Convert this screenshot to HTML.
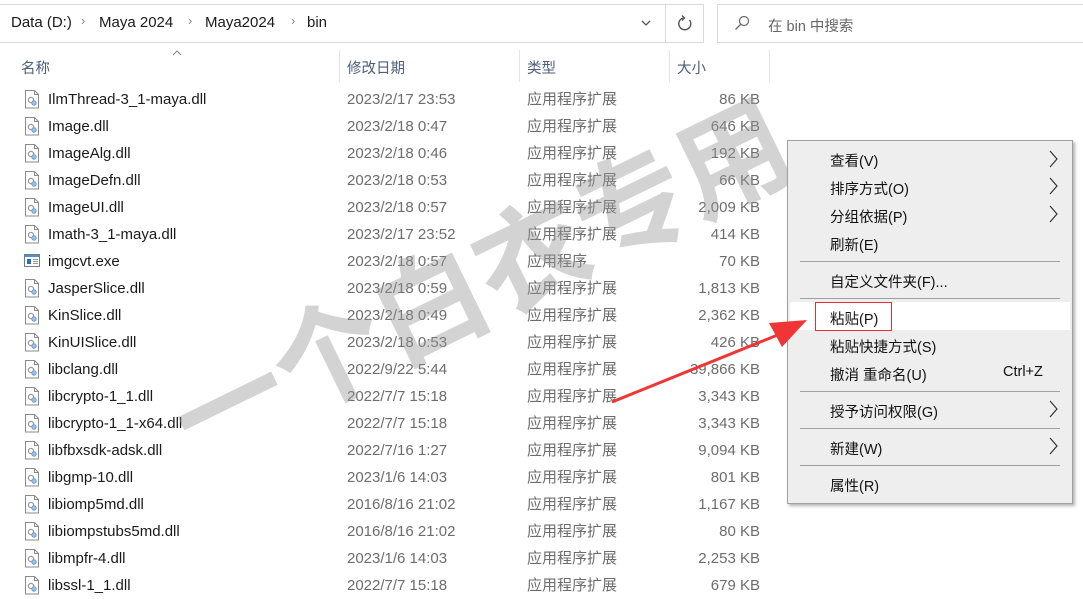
<!DOCTYPE html>
<html><head><meta charset="utf-8"><style>
body{margin:0;width:1083px;height:599px;overflow:hidden;background:#fff;position:relative;font-family:"Liberation Sans","Noto Sans CJK SC",sans-serif;}
.a{position:absolute;white-space:nowrap}
.r{position:absolute;left:0;width:780px;height:27px;font-size:15px;line-height:27px}
.r .n{position:absolute;left:48px;color:#1a1a1a}
.r .d{position:absolute;left:347px;color:#6d6d6d}
.r .t{position:absolute;left:527px;color:#6d6d6d}
.r .s{position:absolute;right:20px;color:#6d6d6d}
.r svg{position:absolute;left:24px;top:4px}
.m{position:absolute;left:830px;font-size:14.5px;color:#111;white-space:nowrap}
.sep{position:absolute;left:800px;width:260px;height:1px;background:#a0a0a0}
</style></head><body>
<div class="a" style="left:0;top:4px;width:665px;height:37px;border-top:1px solid #d9d9d9;border-bottom:1px solid #d9d9d9;border-right:1px solid #d9d9d9"></div>
<div class="a" style="left:665px;top:4px;width:38px;height:37px;border:1px solid #d9d9d9;border-left:none"></div>
<div class="a" style="left:717px;top:4px;width:370px;height:37px;border:1px solid #d9d9d9"></div>
<div class="a" style="left:11px;top:14px;font-size:15px;color:#1a1a1a">Data (D:)</div>
<div class="a" style="left:81px;top:13px;font-size:13px;color:#888">›</div>
<div class="a" style="left:99px;top:14px;font-size:15px;color:#1a1a1a">Maya 2024</div>
<div class="a" style="left:188px;top:13px;font-size:13px;color:#888">›</div>
<div class="a" style="left:205px;top:14px;font-size:15px;color:#1a1a1a">Maya2024</div>
<div class="a" style="left:291px;top:13px;font-size:13px;color:#888">›</div>
<div class="a" style="left:307px;top:14px;font-size:15px;color:#1a1a1a">bin</div>
<svg class="a" style="left:641px;top:20px" width="10" height="7"><path d="M1 1l4 4 4-4" stroke="#555" fill="none" stroke-width="1.3"/></svg>
<svg class="a" style="left:677px;top:15px" width="16" height="17"><path d="M12.5 5A6 6 0 1 1 6 3" stroke="#555" fill="none" stroke-width="1.4"/><path d="M5 0.5l2.5 2.5-2.5 2.5" stroke="#555" fill="none" stroke-width="1.4"/></svg>
<svg class="a" style="left:734px;top:15px" width="16" height="16"><circle cx="10" cy="6" r="4.5" stroke="#666" fill="none" stroke-width="1.2"/><path d="M6.8 9.2L1.5 14.5" stroke="#666" stroke-width="1.3"/></svg>
<div class="a" style="left:768px;top:15px;font-size:14.5px;color:#666">在 bin 中搜索</div>
<svg class="a" style="left:172px;top:50px" width="10" height="6"><path d="M1 5l4-4 4 4" stroke="#888" fill="none"/></svg>
<div class="a" style="left:21px;top:57px;font-size:14.5px;color:#4c607a">名称</div>
<div class="a" style="left:339px;top:50px;width:1px;height:32px;background:#e5e5e5"></div>
<div class="a" style="left:347px;top:57px;font-size:14.5px;color:#4c607a">修改日期</div>
<div class="a" style="left:519px;top:50px;width:1px;height:32px;background:#e5e5e5"></div>
<div class="a" style="left:527px;top:57px;font-size:14.5px;color:#4c607a">类型</div>
<div class="a" style="left:669px;top:50px;width:1px;height:32px;background:#e5e5e5"></div>
<div class="a" style="left:677px;top:57px;font-size:14.5px;color:#4c607a">大小</div>
<div class="a" style="left:769px;top:50px;width:1px;height:32px;background:#e5e5e5"></div>
<svg width="0" height="0" style="position:absolute"><defs><g id="dl"><path d="M1.5 .5h9l4 4v13.5h-13z" fill="#fff" stroke="#8a8a8a"/><path d="M10.5 .5v4h4" fill="none" stroke="#8a8a8a"/><circle cx="7" cy="10" r="2.6" fill="none" stroke="#999" stroke-width="1.3"/><circle cx="10" cy="13" r="2.2" fill="#9fc3e6" stroke="#6a9acb"/></g>
<g id="ex"><rect x=".5" y="2.5" width="15" height="12" fill="#fff" stroke="#7a7a7a"/><rect x="1" y="3" width="14" height="2" fill="#4a8fd8"/><rect x="3" y="7" width="4" height="5" fill="#1f6fd0"/><path d="M9 7.5h5M9 9.5h5M9 11.5h5" stroke="#999"/></g></defs></svg>

<div class="r" style="top:86px"><svg width="16" height="19"><use href="#dl"/></svg><span class="n">IlmThread-3_1-maya.dll</span><span class="d">2023/2/17 23:53</span><span class="t">应用程序扩展</span><span class="s">86 KB</span></div>
<div class="r" style="top:113px"><svg width="16" height="19"><use href="#dl"/></svg><span class="n">Image.dll</span><span class="d">2023/2/18 0:47</span><span class="t">应用程序扩展</span><span class="s">646 KB</span></div>
<div class="r" style="top:140px"><svg width="16" height="19"><use href="#dl"/></svg><span class="n">ImageAlg.dll</span><span class="d">2023/2/18 0:46</span><span class="t">应用程序扩展</span><span class="s">192 KB</span></div>
<div class="r" style="top:167px"><svg width="16" height="19"><use href="#dl"/></svg><span class="n">ImageDefn.dll</span><span class="d">2023/2/18 0:53</span><span class="t">应用程序扩展</span><span class="s">66 KB</span></div>
<div class="r" style="top:194px"><svg width="16" height="19"><use href="#dl"/></svg><span class="n">ImageUI.dll</span><span class="d">2023/2/18 0:57</span><span class="t">应用程序扩展</span><span class="s">2,009 KB</span></div>
<div class="r" style="top:221px"><svg width="16" height="19"><use href="#dl"/></svg><span class="n">Imath-3_1-maya.dll</span><span class="d">2023/2/17 23:52</span><span class="t">应用程序扩展</span><span class="s">414 KB</span></div>
<div class="r" style="top:248px"><svg width="16" height="19"><use href="#ex"/></svg><span class="n">imgcvt.exe</span><span class="d">2023/2/18 0:57</span><span class="t">应用程序</span><span class="s">70 KB</span></div>
<div class="r" style="top:275px"><svg width="16" height="19"><use href="#dl"/></svg><span class="n">JasperSlice.dll</span><span class="d">2023/2/18 0:59</span><span class="t">应用程序扩展</span><span class="s">1,813 KB</span></div>
<div class="r" style="top:302px"><svg width="16" height="19"><use href="#dl"/></svg><span class="n">KinSlice.dll</span><span class="d">2023/2/18 0:49</span><span class="t">应用程序扩展</span><span class="s">2,362 KB</span></div>
<div class="r" style="top:329px"><svg width="16" height="19"><use href="#dl"/></svg><span class="n">KinUISlice.dll</span><span class="d">2023/2/18 0:53</span><span class="t">应用程序扩展</span><span class="s">426 KB</span></div>
<div class="r" style="top:356px"><svg width="16" height="19"><use href="#dl"/></svg><span class="n">libclang.dll</span><span class="d">2022/9/22 5:44</span><span class="t">应用程序扩展</span><span class="s">39,866 KB</span></div>
<div class="r" style="top:383px"><svg width="16" height="19"><use href="#dl"/></svg><span class="n">libcrypto-1_1.dll</span><span class="d">2022/7/7 15:18</span><span class="t">应用程序扩展</span><span class="s">3,343 KB</span></div>
<div class="r" style="top:410px"><svg width="16" height="19"><use href="#dl"/></svg><span class="n">libcrypto-1_1-x64.dll</span><span class="d">2022/7/7 15:18</span><span class="t">应用程序扩展</span><span class="s">3,343 KB</span></div>
<div class="r" style="top:437px"><svg width="16" height="19"><use href="#dl"/></svg><span class="n">libfbxsdk-adsk.dll</span><span class="d">2022/7/16 1:27</span><span class="t">应用程序扩展</span><span class="s">9,094 KB</span></div>
<div class="r" style="top:464px"><svg width="16" height="19"><use href="#dl"/></svg><span class="n">libgmp-10.dll</span><span class="d">2023/1/6 14:03</span><span class="t">应用程序扩展</span><span class="s">801 KB</span></div>
<div class="r" style="top:491px"><svg width="16" height="19"><use href="#dl"/></svg><span class="n">libiomp5md.dll</span><span class="d">2016/8/16 21:02</span><span class="t">应用程序扩展</span><span class="s">1,167 KB</span></div>
<div class="r" style="top:518px"><svg width="16" height="19"><use href="#dl"/></svg><span class="n">libiompstubs5md.dll</span><span class="d">2016/8/16 21:02</span><span class="t">应用程序扩展</span><span class="s">80 KB</span></div>
<div class="r" style="top:545px"><svg width="16" height="19"><use href="#dl"/></svg><span class="n">libmpfr-4.dll</span><span class="d">2023/1/6 14:03</span><span class="t">应用程序扩展</span><span class="s">2,253 KB</span></div>
<div class="r" style="top:572px"><svg width="16" height="19"><use href="#dl"/></svg><span class="n">libssl-1_1.dll</span><span class="d">2022/7/7 15:18</span><span class="t">应用程序扩展</span><span class="s">679 KB</span></div>

<div class="a" style="font-family:'Noto Sans CJK SC',sans-serif;font-weight:700;font-size:112px;line-height:112px;color:rgba(150,150,150,0.42);transform:rotate(-26deg);transform-origin:0 100%;top:360px;left:200px;letter-spacing:0px">一个白衣专用</div>

<div class="a" style="left:787px;top:140px;width:284px;height:362px;background:#eeeeee;border:1px solid #a0a0a0;box-shadow:2px 2px 3px rgba(0,0,0,.3)"></div>
<div class="a" style="left:790px;top:302px;width:280px;height:28px;background:#fff"></div>
<div class="a" style="left:815px;top:302px;width:75px;height:27px;border:1px solid #e03030"></div>
<div class="m" style="top:150px">查看(V)</div>
<div class="m" style="top:178px">排序方式(O)</div>
<div class="m" style="top:206px">分组依据(P)</div>
<div class="m" style="top:234px">刷新(E)</div>
<div class="sep" style="top:261px"></div>
<div class="m" style="top:271px">自定义文件夹(F)...</div>
<div class="sep" style="top:298px"></div>
<div class="m" style="top:308px">粘贴(P)</div>
<div class="m" style="top:336px">粘贴快捷方式(S)</div>
<div class="m" style="top:364px">撤消 重命名(U)</div>
<div class="m" style="top:364px;left:1003px">Ctrl+Z</div>
<div class="sep" style="top:391px"></div>
<div class="m" style="top:401px">授予访问权限(G)</div>
<div class="sep" style="top:428px"></div>
<div class="m" style="top:438px">新建(W)</div>
<div class="sep" style="top:465px"></div>
<div class="m" style="top:475px">属性(R)</div>
<svg class="a" style="left:1048px;top:150px" width="12" height="340"><g stroke="#333" fill="none" stroke-width="1.2"><path d="M2 1l7 8-7 8"/><path d="M2 28l7 8-7 8"/><path d="M2 56l7 8-7 8"/><path d="M2 251l7 8-7 8"/><path d="M2 288l7 8-7 8"/></g></svg>

<svg class="a" style="left:600px;top:310px" width="220" height="100"><path d="M12 92L185 22" stroke="#ef3535" stroke-width="3"/><path d="M207 10l-38 3 13 24z" fill="#ef3535"/></svg>
</body></html>
